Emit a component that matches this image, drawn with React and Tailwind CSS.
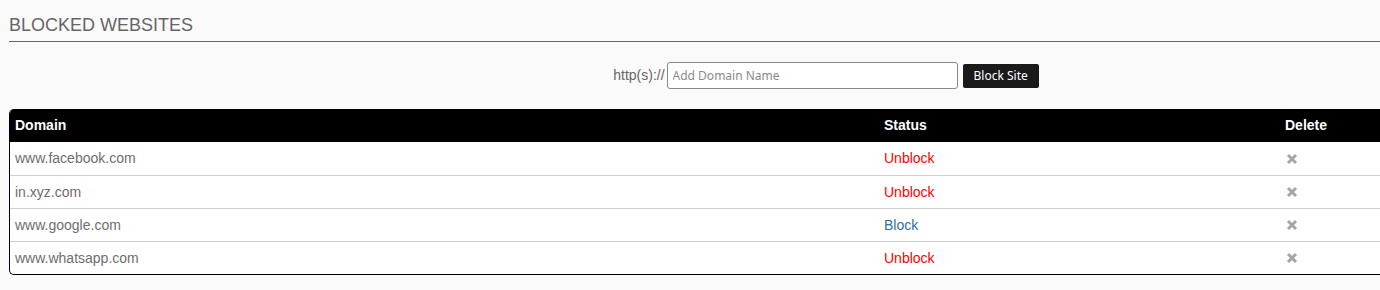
import React, { useState } from "react";

const SITES = [
  { domain: "www.facebook.com", blocked: true },
  { domain: "in.xyz.com", blocked: true },
  { domain: "www.google.com", blocked: false },
  { domain: "www.whatsapp.com", blocked: true },
];

const RemoveIcon = () => (
  <svg width="12" height="12" viewBox="0 0 12 12">
    <path
      d="M2 2 L10 10 M10 2 L2 10"
      stroke="#aaa3a6"
      strokeWidth="3"
      strokeLinecap="butt"
    />
  </svg>
);

export default function App() {
  const [sites, setSites] = useState(SITES);
  const [domain, setDomain] = useState("");

  return (
    <div className="w-[1380px] h-[290px] overflow-hidden bg-[#fafafa] font-['Liberation_Sans',Arial,sans-serif]">
      <div className="pl-[9px] pt-[15px]">
        <h2 className="text-[18px] leading-[20px] text-[#666] uppercase">
          Blocked Websites
        </h2>
        <div className="mt-[6px] h-px bg-[#6a6a6a]" />
      </div>

      <div className="flex items-center justify-center gap-[5px] pt-[20px] pl-[272px]">
        <div className="flex items-center gap-[2px]">
          <span className="text-[14px] text-[#666]">http(s)://</span>
          <input
            value={domain}
            onChange={(e) => setDomain(e.target.value)}
            placeholder="Add Domain Name"
            className="w-[291px] h-[27px] px-[5px] border border-[#888] rounded-[3px] bg-white text-[12px] font-['Noto_Sans',sans-serif] placeholder:text-[#8a8a8a] outline-none"
          />
        </div>
        <button className="h-[24px] px-[11px] bg-[#1a1a1a] rounded-[2px] text-white text-[12px] font-['Noto_Sans',sans-serif] leading-none">
          Block Site
        </button>
      </div>

      <div className="ml-[9px] mt-[20px] w-[1400px] border-l border-b border-black rounded-bl-[5px] rounded-tl-[5px] overflow-hidden bg-white">
        <div className="flex h-[33px] items-center bg-black text-white text-[14px] font-bold">
          <div className="w-[869px] pl-[5px]">Domain</div>
          <div className="w-[401px] pl-[5px]">Status</div>
          <div className="flex-1 pl-[5px]">Delete</div>
        </div>
        {sites.map((s, i) => (
          <div
            key={s.domain}
            className={`flex h-[33px] items-center text-[14px] ${i > 0 ? "border-t border-[#cfcfcf]" : ""}`}
          >
            <div className="w-[869px] pl-[5px] text-[#6e6e6e]">{s.domain}</div>
            <div
              className={`w-[401px] pl-[5px] ${s.blocked ? "text-[#ff0000]" : "text-[#2f6f9f]"}`}
            >
              {s.blocked ? "Unblock" : "Block"}
            </div>
            <div className="flex-1 pl-[6px]">
              <button
                className="flex items-center"
                onClick={() => setSites(sites.filter((x) => x.domain !== s.domain))}
              >
                <RemoveIcon />
              </button>
            </div>
          </div>
        ))}
      </div>
    </div>
  );
}
